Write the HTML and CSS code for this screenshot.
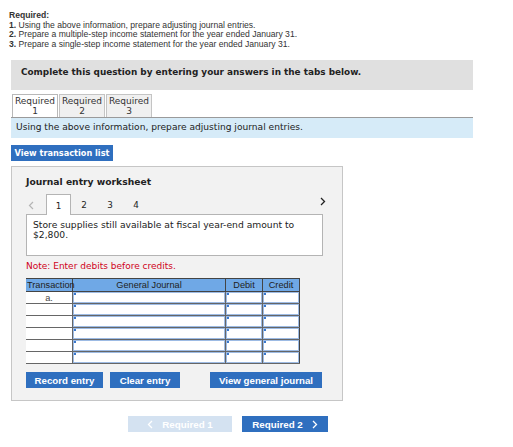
FILE: index.html
```html
<!DOCTYPE html>
<html lang="en">
<head>
    <meta charset="UTF-8">
    <title>Journal entry worksheet</title>
    <link rel="stylesheet" href="styles.css">
</head>
<body>
    <div id="required">
        <b>Required:</b>
        <p><b>1.</b> Using the above information, prepare adjusting journal entries.</p>
        <p><b>2.</b> Prepare a multiple-step income statement for the year ended January 31.</p>
        <p><b>3.</b> Prepare a single-step income statement for the year ended January 31.</p>
    </div>
    <div id="main">
        <div class="prompt">Complete this question by entering your answers in the tabs below.</div>
        <div class="tabs">
            <div class="tab active">Required<br>1</div>
            <div class="tab">Required<br>2</div>
            <div class="tab">Required<br>3</div>
        </div>
        <div class="info">Using the above information, prepare adjusting journal entries.</div>
        <button class="btn btn-list">View transaction list</button>

        <div class="worksheet">
            <h3>Journal entry worksheet</h3>
            <div class="nav">
                <span class="arrow prev">
                    <svg width="6" height="9" viewBox="0 0 6 9"><path d="M5 1 L1.5 4.5 L5 8" fill="none" stroke="#b5b5b5" stroke-width="1.2"/></svg>
                </span>
                <span class="num current">1</span>
                <span class="num">2</span>
                <span class="num">3</span>
                <span class="num">4</span>
                <span class="arrow next">
                    <svg width="6" height="9" viewBox="0 0 6 9"><path d="M1 1 L4.5 4.5 L1 8" fill="none" stroke="#222" stroke-width="1.3"/></svg>
                </span>
            </div>
            <div class="desc">Store supplies still available at fiscal year-end amount to $2,800.</div>
            <p class="note">Note: Enter debits before credits.</p>
            <table class="journal">
                <tr>
                    <th class="c-trans">Transaction</th>
                    <th class="c-gj">General Journal</th>
                    <th class="c-amt">Debit</th>
                    <th class="c-amt">Credit</th>
                </tr>
                <tr><td>a.</td><td><div class="field"></div></td><td><div class="field"></div></td><td><div class="field"></div></td></tr>
                <tr><td></td><td><div class="field"></div></td><td><div class="field"></div></td><td><div class="field"></div></td></tr>
                <tr><td></td><td><div class="field"></div></td><td><div class="field"></div></td><td><div class="field"></div></td></tr>
                <tr><td></td><td><div class="field"></div></td><td><div class="field"></div></td><td><div class="field"></div></td></tr>
                <tr><td></td><td><div class="field"></div></td><td><div class="field"></div></td><td><div class="field"></div></td></tr>
                <tr><td></td><td><div class="field"></div></td><td><div class="field"></div></td><td><div class="field"></div></td></tr>
            </table>
            <div class="actions">
                <button class="btn btn-record">Record entry</button>
                <button class="btn btn-clear">Clear entry</button>
                <button class="btn btn-view">View general journal</button>
            </div>
        </div>

        <div class="pager">
            <button class="btn btn-prev" disabled>
                <svg width="6" height="9" viewBox="0 0 6 9"><path d="M5 1 L1.5 4.5 L5 8" fill="none" stroke="#fff" stroke-width="1.3"/></svg>
                Required 1
            </button>
            <button class="btn btn-next">
                Required 2
                <svg width="6" height="9" viewBox="0 0 6 9"><path d="M1 1 L4.5 4.5 L1 8" fill="none" stroke="#fff" stroke-width="1.3"/></svg>
            </button>
        </div>
    </div>
</body>
</html>
```

FILE: styles.css
```css
body{
    margin: 0;
    background: #fff;
    color: #222;
    font-family: "DejaVu Sans", Verdana, sans-serif;
}
#required{
    padding: 11px 0 0 9px;
    height: 49px;
    font-family: "Liberation Sans", Arial, sans-serif;
    font-size: 8.6px;
    line-height: 9.7px;
    color: #333;
}
#required p{
    margin: 0;
}
#main{
    width: 462px;
    margin-left: 11px;
}
.prompt{
    height: 30px;
    box-sizing: border-box;
    padding: 7px 10px;
    background: #e0e0e0;
    font-size: 8.9px;
    font-weight: bold;
    line-height: 11px;
}
.tabs{
    display: flex;
    gap: 1px;
    margin-top: 4px;
    padding-left: 1px;
    border-bottom: 1px solid #9a9a9a;
}
.tab{
    width: 46px;
    height: 23px;
    box-sizing: border-box;
    padding-top: 1px;
    border: 1px solid #c4c4c4;
    border-bottom: none;
    background: #f0f0f0;
    text-align: center;
    font-size: 9px;
    line-height: 10px;
    color: #333;
}
.tab.active{
    background: #fff;
    border-color: #b8b8b8;
}
.info{
    height: 20px;
    box-sizing: border-box;
    padding: 4px 5px;
    background: #d6ebf8;
    font-size: 9.1px;
    line-height: 11px;
}
.btn{
    border: none;
    color: #fff;
    background: #2f6fbf;
    font-weight: bold;
    padding: 0;
    cursor: pointer;
}
.btn-list{
    display: block;
    margin-top: 7px;
    width: 102px;
    height: 16px;
    font-family: "DejaVu Sans", Verdana, sans-serif;
    font-size: 8.2px;
}
.worksheet{
    margin-top: 5px;
    width: 332px;
    height: 235px;
    box-sizing: border-box;
    padding: 10px 20px 0 14px;
    background: #f2f2f2;
    border: 1px solid #c6c6c6;
}
.worksheet h3{
    margin: 0;
    font-size: 9.2px;
    line-height: 10px;
}
.nav{
    display: flex;
    align-items: flex-end;
    height: 20px;
    margin-top: 7px;
    font-size: 8.8px;
}
.nav .arrow{
    display: flex;
    align-items: center;
    height: 18px;
}
.nav .prev{
    margin: 0 12px 0 2px;
}
.nav .next{
    margin-left: auto;
    margin-right: -4px;
    padding-bottom: 4px;
}
.nav .num{
    width: 26px;
    height: 20px;
    box-sizing: border-box;
    padding-top: 6px;
    text-align: center;
}
.nav .current{
    width: 25px;
    background: #fff;
    border: 1px solid #b4b4b4;
    border-bottom: none;
    margin-bottom: -1px;
    height: 21px;
    position: relative;
    z-index: 1;
}
.desc{
    width: 297px;
    height: 42px;
    box-sizing: border-box;
    padding: 5px 6px;
    background: #fff;
    border: 1px solid #b4b4b4;
    font-size: 9.2px;
    line-height: 9.5px;
}
.note{
    margin: 5px 0 0;
    font-size: 9px;
    line-height: 11px;
    color: #d0021b;
}
.journal{
    margin: 6px 0 0;
    border-collapse: collapse;
    font-family: "Liberation Sans", Arial, sans-serif;
    font-size: 9.2px;
    table-layout: fixed;
    width: 274px;
}
.journal th{
    height: 12px;
    padding: 0;
    background: #6fa8e6;
    border: 1px solid #444;
    border-left: none;
    font-weight: normal;
    color: #222;
    line-height: 11px;
}
.journal th.c-trans{
    text-align: left;
    padding-left: 1px;
    white-space: nowrap;
    overflow: visible;
}
.journal .c-trans{ width: 45px; }
.journal .c-gj{ width: 152px; }
.journal .c-amt{ width: 36px; }
.journal td{
    height: 11px;
    padding: 0;
    background: #fff;
    border: 1px solid #666;
    border-left: none;
    text-align: center;
    line-height: 10px;
    color: #444;
}
.journal tr td:last-child,
.journal tr th:last-child{
    border-right: 1px solid #444;
}
.journal td:not(:first-child){
    border-left: 1px solid #666;
}
.field{
    position: relative;
    height: 11px;
    box-sizing: border-box;
    border: 1px solid #9dbbe4;
    background: #fff;
}
.field::before{
    content: "";
    position: absolute;
    left: 0;
    top: 0;
    width: 2px;
    height: 2px;
    background: #3a78cc;
}
.actions{
    display: flex;
    margin: 8px 0 0;
}
.actions .btn{
    height: 16px;
    font-family: "Liberation Sans", Arial, sans-serif;
    font-size: 9.7px;
}
.btn-record{ width: 79px; }
.btn-clear{ width: 72px; margin-left: 7px; }
.btn-view{ width: 115px; margin-left: 30px; }
.pager{
    display: flex;
    gap: 10px;
    margin: 15px 0 0 117px;
}
.pager .btn{
    display: flex;
    align-items: center;
    justify-content: center;
    gap: 9px;
    height: 16px;
    font-family: "Liberation Sans", Arial, sans-serif;
    font-size: 9.8px;
}
.btn-prev{
    width: 104px;
    background: #d4e2f1;
    cursor: default;
}
.btn-next{
    width: 86px;
}
```
